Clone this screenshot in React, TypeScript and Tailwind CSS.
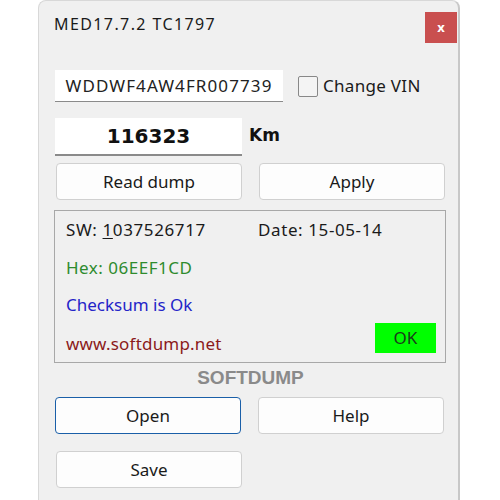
import React from 'react';

const font = { fontFamily: '"Noto Sans", "Open Sans", sans-serif' };

const Btn = ({ label, focused = false }: { label: string; focused?: boolean }) => (
  <button
    className={`w-[186px] h-[37px] rounded-[4px] bg-[#fdfdfd] text-[17px] text-[#1a1a1a] ${
      focused ? 'border-[1.5px] border-[#1a5fa8]' : 'border border-[#d0d0d0]'
    }`}
  >
    {label}
  </button>
);

export default function App() {
  return (
    <div className="min-h-screen bg-white" style={font}>
      <div className="ml-[38px] w-[422px] h-[500px] bg-[#f0f0f0] rounded-t-[8px] border-l border-t border-[#d8d8d8] border-r-2 border-r-[#c8c8c8]">
        {/* Title bar */}
        <div className="flex justify-between items-start h-[57px] pl-[15px] pr-[1px] pt-[11px]">
          <div className="text-[16px] tracking-[1.4px] text-[#1a1a1a] leading-[24px]">MED17.7.2 TC1797</div>
          <div className="w-[32px] h-[31px] bg-[#c94f4f] text-white flex items-center justify-center text-[13px] font-bold">
            x
          </div>
        </div>

        <div className="pl-[16px]">
          {/* VIN */}
          <div className="flex items-center h-[32px] mt-[12px]">
            <div className="w-[228px] h-[32px] bg-white border-b border-[#8a8a8a] flex items-center justify-center text-[17px] text-[#222] tracking-[1.1px]">
              WDDWF4AW4FR007739
            </div>
            <div className="ml-[15px] w-[20px] h-[21px] border border-[#888] bg-[#f4f4f4] rounded-[2px]" />
            <span className="ml-[5px] text-[17px] tracking-[0.3px] text-[#1a1a1a]">Change VIN</span>
          </div>

          {/* Km */}
          <div className="flex items-start mt-[16px]">
            <div
              className="w-[187px] h-[38px] bg-white border-b-2 border-[#8a8a8a] flex items-center justify-center text-[20px] font-bold text-[#111]"
              style={{ fontFamily: '"DejaVu Sans", sans-serif' }}
            >
              116323
            </div>
            <span
              className="ml-[7px] mt-[5px] text-[17px] font-bold text-[#111]"
              style={{ fontFamily: '"DejaVu Sans", sans-serif' }}
            >
              Km
            </span>
          </div>

          {/* Read / Apply */}
          <div className="flex gap-[17px] mt-[7px] pl-[1px]">
            <Btn label="Read dump" />
            <Btn label="Apply" />
          </div>

          {/* Info box */}
          <div className="mt-[10px] -ml-[1px] w-[392px] h-[153px] border border-[#a8a8a8] relative text-[17px]">
            <div className="flex pl-[11px] pt-[8px] leading-[22px] tracking-[0.6px]">
              <span className="text-[#1a1a1a] w-[192px]">
                SW: <span className="underline underline-offset-2">1</span>037526717
              </span>
              <span className="text-[#1a1a1a]">Date: 15-05-14</span>
            </div>
            <div className="pl-[11px] mt-[16px] leading-[22px] tracking-[0.5px] text-[#2e8b2e]">Hex: 06EEF1CD</div>
            <div className="pl-[11px] mt-[15px] leading-[22px] text-[#2424c8]">Checksum is Ok</div>
            <div className="pl-[11px] mt-[17px] leading-[22px] tracking-[0.2px] text-[#8b1a1a]">www.softdump.net</div>
            <div className="absolute left-[320px] top-[112px] w-[61px] h-[30px] bg-[#00ff00] flex items-center justify-center text-[17px] text-[#1a3a1a]">
              OK
            </div>
          </div>

          <div
            className="w-[391px] text-center mt-[4px] text-[19px] font-bold text-[#8a8a8a] leading-[22px]"
            style={{ fontFamily: '"Liberation Sans", sans-serif' }}
          >
            SOFTDUMP
          </div>

          <div className="flex gap-[17px] mt-[8px]">
            <Btn label="Open" focused />
            <Btn label="Help" />
          </div>
          <div className="flex mt-[17px] pl-[1px]">
            <Btn label="Save" />
          </div>
        </div>
      </div>
    </div>
  );
}
